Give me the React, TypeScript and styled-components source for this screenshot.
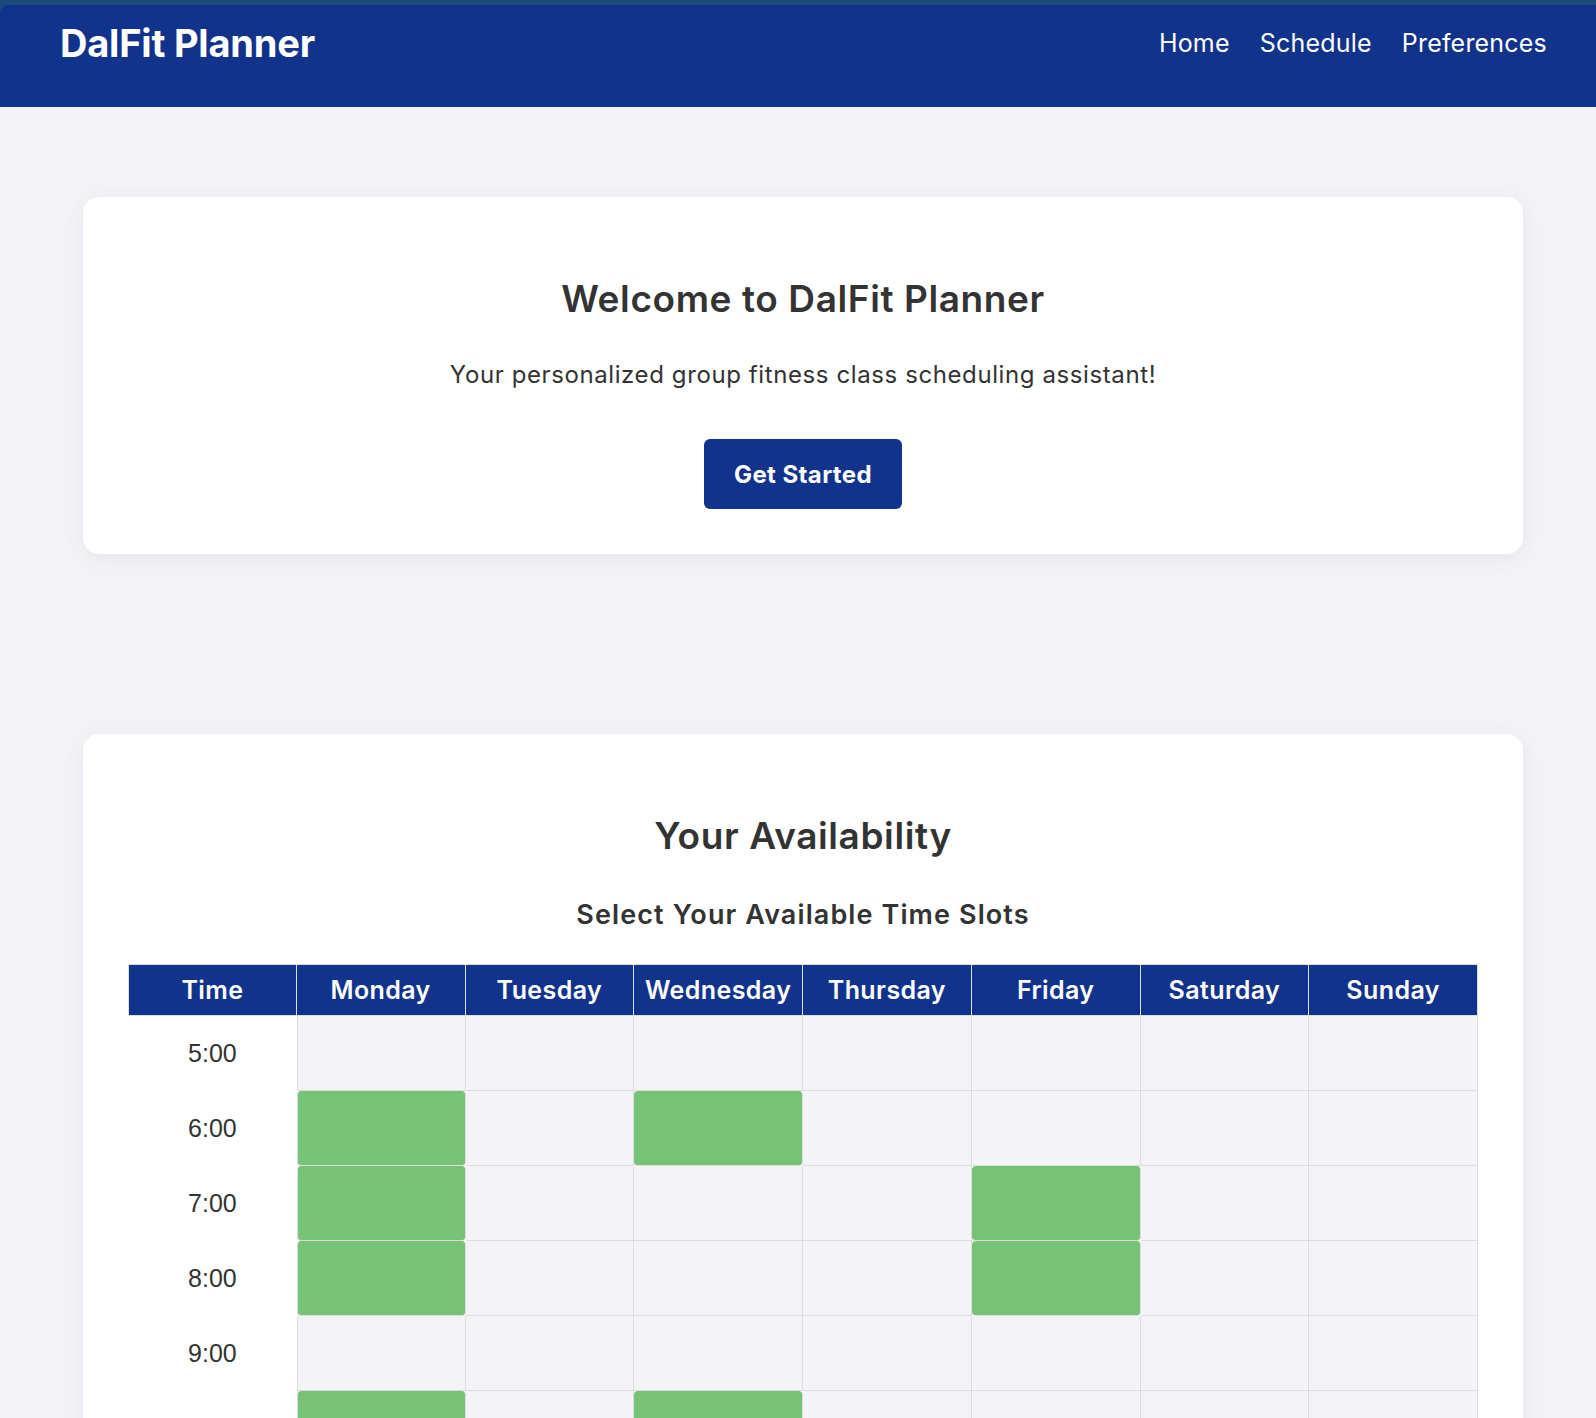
import React from "react";
import styled, { createGlobalStyle } from "styled-components";

const GlobalStyle = createGlobalStyle`
  html, body { margin: 0; padding: 0; }
  body {
    background: #f4f4f8;
    font-family: "Inter", "Noto Sans", sans-serif;
    color: #333;
  }
  * { box-sizing: border-box; }
`;

const Shell = styled.div`
  min-height: 1418px;
  background: #f4f4f8;
`;

const TopStrip = styled.div`
  background: #1b4b7a;
  padding-top: 5px;
`;

const Header = styled.header`
  height: 102px;
  background: #12338b;
  border-top-left-radius: 8px;
  display: flex;
  align-items: center;
  justify-content: space-between;
  padding: 16px 49px 42px 60px;
`;

const Logo = styled.h1`
  margin: 0;
  font-size: 38px;
  line-height: 44px;
  font-weight: 700;
  color: #fff;
  letter-spacing: -0.2px;
`;

const Nav = styled.nav`
  display: flex;
  gap: 30px;
`;

const NavLink = styled.a`
  font-size: 25px;
  line-height: 30px;
  color: #fff;
  text-decoration: none;
  font-weight: 400;
  letter-spacing: 0.2px;
`;

const Main = styled.main`
  padding: 90px 73px 0 83px;
  display: flex;
  flex-direction: column;
  gap: 180px;
`;

const Card = styled.section`
  background: #fff;
  border-radius: 16px;
  box-shadow: 0 4px 22px rgba(30, 30, 70, 0.08);
  padding: 45px 45px 45px;
  display: flex;
  flex-direction: column;
  align-items: center;
  text-align: center;
`;

const Title = styled.h2`
  margin: 35px 0 0;
  font-size: 37px;
  line-height: 44px;
  font-weight: 600;
  letter-spacing: 0.6px;
  color: #333;
`;

const Subtitle = styled.p`
  margin: 39px 0 0;
  font-size: 24px;
  line-height: 30px;
  letter-spacing: 0.6px;
  color: #333;
`;

const PrimaryButton = styled.button`
  margin-top: 49px;
  width: 198px;
  height: 70px;
  border: none;
  border-radius: 6px;
  background: #12338b;
  color: #fff;
  font-family: "Inter", "Noto Sans", sans-serif;
  font-size: 24px;
  font-weight: 700;
  letter-spacing: 0.4px;
  cursor: pointer;
`;

const SubHeading = styled.h3`
  margin: 42px 0 0;
  font-size: 27px;
  line-height: 30px;
  font-weight: 600;
  letter-spacing: 1.1px;
  color: #333;
`;

const Table = styled.table`
  margin-top: 34px;
  width: 100%;
  table-layout: fixed;
  border-collapse: separate;
  border-spacing: 0;
`;

const HeadCell = styled.th<{ $first?: boolean }>`
  height: 52px;
  padding: 0;
  background: #12338b;
  color: #fff;
  font-size: 25px;
  font-weight: 600;
  letter-spacing: 0.4px;
  border-top: 1px solid #ddd;
  border-bottom: 1px solid #ddd;
  border-right: 1px solid #ddd;
  border-left: ${(p) => (p.$first ? "1px solid #ddd" : "none")};
`;

const TimeCell = styled.td`
  height: 75px;
  padding: 0;
  background: #fff;
  font-family: "Liberation Sans", Arial, sans-serif;
  font-size: 25px;
  color: #333;
  text-align: center;
  vertical-align: middle;
`;

const SlotCell = styled.td<{ $available: boolean; $first?: boolean }>`
  height: 75px;
  padding: 0;
  background: ${(p) => (p.$available ? "#78c278" : "#f4f4f8")};
  border-radius: ${(p) => (p.$available ? "4px" : "0")};
  border-right: 1px solid #ddd;
  border-bottom: 1px solid #ddd;
  border-left: ${(p) => (p.$first ? "1px solid #ddd" : "none")};
  cursor: pointer;
`;

const days = [
  "Monday",
  "Tuesday",
  "Wednesday",
  "Thursday",
  "Friday",
  "Saturday",
  "Sunday",
];

const times = [
  "5:00", "6:00", "7:00", "8:00", "9:00", "10:00", "11:00", "12:00",
  "13:00", "14:00", "15:00", "16:00", "17:00", "18:00", "19:00", "20:00",
];

const availability: Record<string, string[]> = {
  "6:00": ["Monday", "Wednesday"],
  "7:00": ["Monday", "Friday"],
  "8:00": ["Monday", "Friday"],
  "10:00": ["Monday", "Wednesday"],
  "12:00": ["Tuesday", "Thursday"],
  "17:00": ["Monday", "Wednesday", "Friday"],
  "18:00": ["Saturday"],
};

export default function App() {
  return (
    <Shell>
      <GlobalStyle />
      <TopStrip>
        <Header>
          <Logo>DalFit Planner</Logo>
          <Nav>
            <NavLink href="#">Home</NavLink>
            <NavLink href="#">Schedule</NavLink>
            <NavLink href="#">Preferences</NavLink>
          </Nav>
        </Header>
      </TopStrip>
      <Main>
        <Card>
          <Title>Welcome to DalFit Planner</Title>
          <Subtitle>
            Your personalized group fitness class scheduling assistant!
          </Subtitle>
          <PrimaryButton>Get Started</PrimaryButton>
        </Card>
        <Card>
          <Title>Your Availability</Title>
          <SubHeading>Select Your Available Time Slots</SubHeading>
          <Table>
            <thead>
              <tr>
                <HeadCell $first>Time</HeadCell>
                {days.map((d) => (
                  <HeadCell key={d}>{d}</HeadCell>
                ))}
              </tr>
            </thead>
            <tbody>
              {times.map((t) => (
                <tr key={t}>
                  <TimeCell>{t}</TimeCell>
                  {days.map((d, i) => (
                    <SlotCell
                      key={d}
                      $first={i === 0}
                      $available={(availability[t] || []).includes(d)}
                    />
                  ))}
                </tr>
              ))}
            </tbody>
          </Table>
        </Card>
      </Main>
    </Shell>
  );
}
